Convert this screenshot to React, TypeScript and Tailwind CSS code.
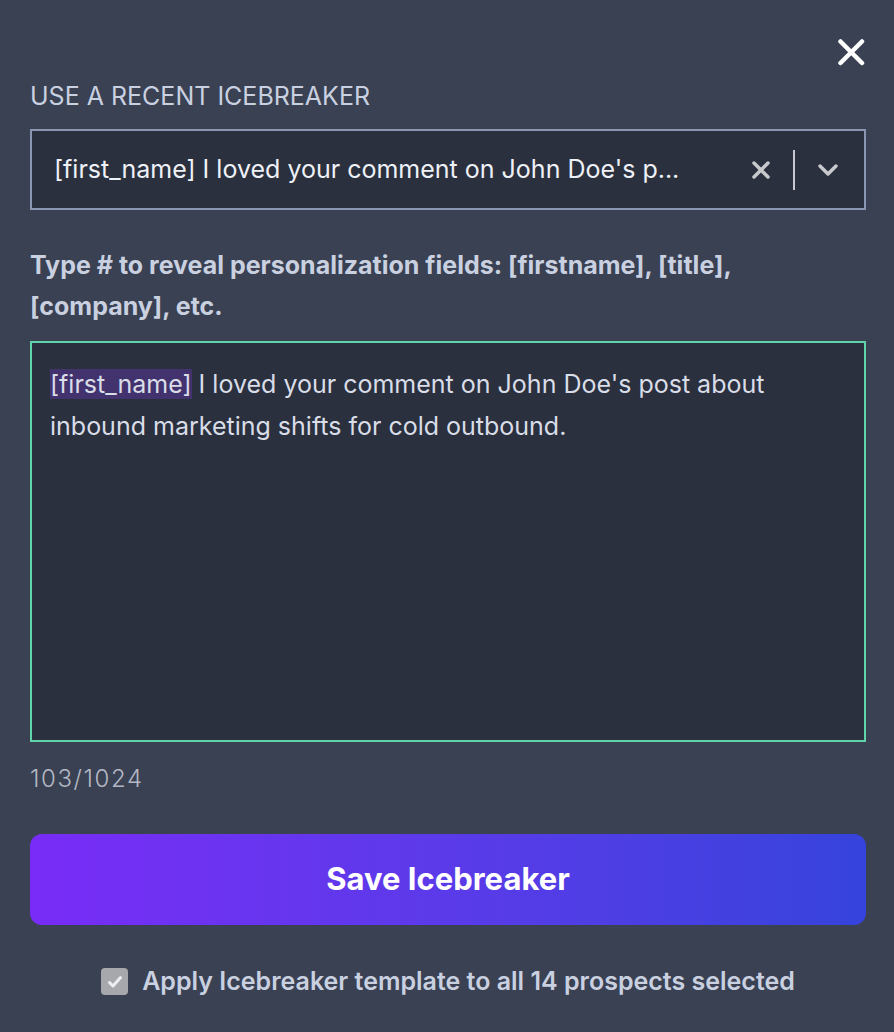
import React, { useState } from 'react';

export default function App() {
  const [applyAll, setApplyAll] = useState(true);
  const text = "I loved your comment on John Doe's post about inbound marketing shifts for cold outbound.";

  return (
    <div
      className="min-h-screen w-full bg-[#394152] pl-[30px] pr-[28px] pt-[38px] pb-8"
      style={{ fontFamily: 'Inter, "Noto Sans", sans-serif' }}
    >
      {/* Close */}
      <div className="flex justify-end pr-[1px]">
        <button className="text-white" aria-label="Close">
          <svg width="28" height="28" viewBox="0 0 28 28" fill="none">
            <path d="M3.5 3.5L25 25M25 3.5L3.5 25" stroke="currentColor" strokeWidth="4.5" strokeLinecap="round" />
          </svg>
        </button>
      </div>

      <h2 className="mt-[14px] text-[25px] leading-[32px] text-[#c9d0e0] uppercase">
        Use a recent icebreaker
      </h2>

      {/* Recent select */}
      <div className="mt-[17px] flex h-[81px] items-center border-2 border-[#8b96b3] bg-[#2a303d] pl-[22px] pr-[25px]">
        <span className="flex-1 truncate text-[25px] text-[#eef1f7]">
          [first_name] I loved your comment on John Doe's p...
        </span>
        <button className="ml-4 text-[#c7c9cd]" aria-label="Clear">
          <svg width="20" height="20" viewBox="0 0 20 20" fill="none">
            <path d="M3 3L17 17M17 3L3 17" stroke="currentColor" strokeWidth="3.5" strokeLinecap="round" />
          </svg>
        </button>
        <div className="mx-[22px] h-[40px] w-[2px] bg-[#c7c9cd]" />
        <svg width="22" height="14" viewBox="0 0 22 14" fill="none" className="text-[#c7c9cd]">
          <path d="M3 3L11 11L19 3" stroke="currentColor" strokeWidth="3.5" strokeLinecap="round" strokeLinejoin="round" />
        </svg>
      </div>

      <p className="mt-[35px] text-[25px] font-bold leading-[41px] text-[#c9d0e0]">
        Type # to reveal personalization fields: [firstname], [title], [company], etc.
      </p>

      {/* Editor */}
      <div className="mt-[14px] h-[401px] border-2 border-[#5fd3a9] bg-[#2a303d] px-[18px] pt-[20px]">
        <p className="text-[25px] leading-[42px] text-[#d9dde8]">
          <mark className="bg-[#42336e] text-[#d9dde8]">[first_name]</mark> {text}
        </p>
      </div>

      <div className="mt-[19px] text-[24px] font-light tracking-[1.6px] text-[#b3b8c4]">103/1024</div>

      <button className="mt-[37px] flex h-[91px] w-full items-center justify-center rounded-[12px] bg-gradient-to-r from-[#782bf6] to-[#3543dc] text-[31px] font-bold text-white">
        Save Icebreaker
      </button>

      <label className="mt-[38px] flex items-center justify-center gap-[14px] cursor-pointer">
        <span
          onClick={() => setApplyAll(!applyAll)}
          className="flex h-[27px] w-[27px] items-center justify-center rounded-[4px] bg-[#a7a8ab]"
        >
          {applyAll && (
            <svg width="18" height="18" viewBox="0 0 18 18" fill="none">
              <path d="M3.5 9.5L7 13L14.5 4.5" stroke="#eceef0" strokeWidth="3" strokeLinecap="round" strokeLinejoin="round" />
            </svg>
          )}
        </span>
        <span className="text-[25px] font-semibold text-[#c9d0e0]">
          Apply Icebreaker template to all 14 prospects selected
        </span>
      </label>
    </div>
  );
}
